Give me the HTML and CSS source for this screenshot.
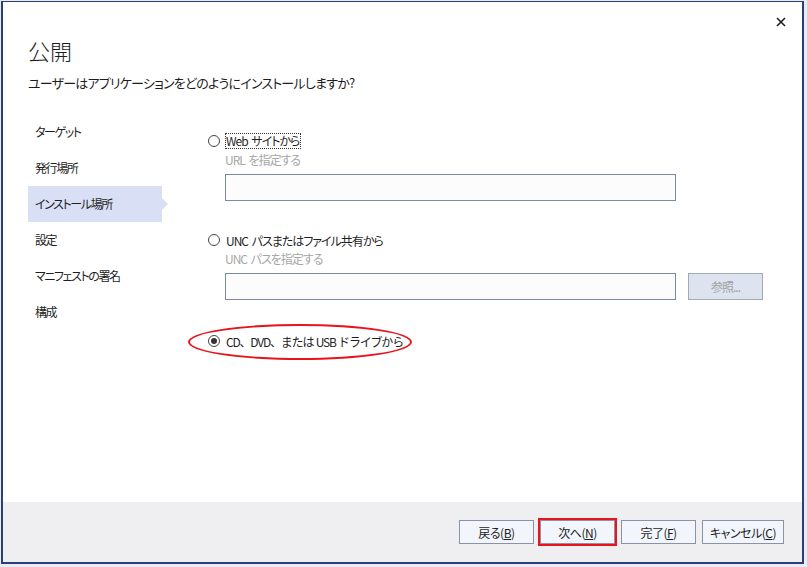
FILE: index.html
```html
<!DOCTYPE html>
<html lang="ja">
<head>
    <meta charset="UTF-8">
    <title>公開</title>
    <link rel="stylesheet" href="styles.css">
</head>
<body>
    <div class="dialog">
        <!-- Close button -->
        <svg class="close" width="10" height="10" viewBox="0 0 10 10">
            <path d="M1 1 L9 9 M9 1 L1 9" stroke="#1e1e1e" stroke-width="1.6" fill="none"/>
        </svg>

        <div class="header">
            <h1>公開</h1>
            <p class="subtitle">ユーザーはアプリケーションをどのようにインストールしますか?</p>
        </div>

        <div class="main">
            <!-- Wizard steps -->
            <ul class="nav">
                <li>ターゲット</li>
                <li>発行場所</li>
                <li class="active">インストール場所</li>
                <li>設定</li>
                <li>マニフェストの署名</li>
                <li>構成</li>
            </ul>

            <div class="content">
                <div class="option">
                    <div class="radio-row">
                        <span class="radio"></span>
                        <span class="label focused">Web サイトから</span>
                    </div>
                    <div class="hint">URL を指定する</div>
                    <div class="field-row">
                        <div class="textbox"></div>
                    </div>
                </div>

                <div class="option second">
                    <div class="radio-row">
                        <span class="radio"></span>
                        <span class="label">UNC パスまたはファイル共有から</span>
                    </div>
                    <div class="hint">UNC パスを指定する</div>
                    <div class="field-row">
                        <div class="textbox"></div>
                        <div class="browse">参照...</div>
                    </div>
                </div>

                <div class="option third">
                    <div class="radio-row">
                        <span class="radio checked"></span>
                        <span class="label drive">CD、DVD、または USB ドライブから</span>
                        <span class="mark-ellipse"></span>
                    </div>
                </div>
            </div>
        </div>

        <div class="footer">
            <button class="btn">戻る(<u>B</u>)</button>
            <button class="btn marked">次へ(<u>N</u>)</button>
            <button class="btn">完了(<u>F</u>)</button>
            <button class="btn">キャンセル(<u>C</u>)</button>
        </div>
    </div>
</body>
</html>
```

FILE: styles.css
```css
/* General Styles */
body {
    margin: 0;
    padding: 1px 0 0 1px;
    background: #e9ecf2;
    font-family: 'Noto Sans CJK JP', 'Noto Sans', sans-serif;
    font-size: 12px;
    font-feature-settings: "palt";
    letter-spacing: -1px;
    word-spacing: 2px;
    color: #1e1e1e;
    height: 567px;
    box-sizing: border-box;
    overflow: hidden;
}

.dialog {
    position: relative;
    width: 803px;
    height: 563px;
    box-sizing: border-box;
    border: 2px solid #283f7c;
    border-top-width: 1px;
    background: #fff;
    display: flex;
    flex-direction: column;
}

.close {
    position: absolute;
    top: 15px;
    right: 16px;
}

/* Header */
.header {
    padding: 32px 0 0 25px;
    height: 82px;
}

h1 {
    margin: 0;
    font-size: 22px;
    font-weight: 300;
    line-height: 32px;
    letter-spacing: 0;
    font-feature-settings: normal;
}

.subtitle {
    margin: 8px 0 0 0;
    font-size: 13px;
    line-height: 18px;
    letter-spacing: -0.8px;
}

/* Body */
.main {
    flex: 1;
    display: flex;
}

.nav {
    list-style: none;
    margin: -2px 0 0 0;
    padding: 0 0 0 25px;
    width: 134px;
}

.nav li {
    position: relative;
    height: 36px;
    line-height: 36px;
    padding-left: 7px;
    letter-spacing: -1.4px;
}

.nav li.active {
    background: #d9e0f6;
}

.nav li.active::after {
    content: "";
    position: absolute;
    top: 12px;
    right: -6px;
    border-left: 6px solid #d9e0f6;
    border-top: 6px solid transparent;
    border-bottom: 6px solid transparent;
}

.content {
    padding: 16px 0 0 46px;
    display: flex;
    flex-direction: column;
}

.option {
    display: flex;
    flex-direction: column;
}

.option.second {
    margin-top: 30px;
}

.option.third {
    margin-top: 32px;
}

.radio-row {
    position: relative;
    display: flex;
    align-items: center;
    height: 18px;
    gap: 6px;
}

.radio {
    width: 10px;
    height: 10px;
    border: 1px solid #444;
    border-radius: 50%;
    position: relative;
}

.radio.checked::after {
    content: "";
    position: absolute;
    top: 2px;
    left: 2px;
    width: 6px;
    height: 6px;
    border-radius: 50%;
    background: #333;
}

.label.focused {
    outline: 1px dotted #333;
    line-height: 14px;
    padding: 0 1px 0 0;
}

.label.drive {
    font-feature-settings: normal;
    letter-spacing: -1.2px;
    word-spacing: 1px;
}

.hint {
    color: #a6a6a6;
    margin: 1px 0 0 17px;
    line-height: 18px;
}

.field-row {
    display: flex;
    gap: 12px;
    margin: 5px 0 0 17px;
}

.textbox {
    width: 449px;
    height: 25px;
    border: 1px solid #7b8aa3;
    background: #fcfcfc;
}

.browse {
    width: 73px;
    height: 25px;
    line-height: 25px;
    text-align: center;
    border: 1px solid #a3a9b5;
    background: #dde4f0;
    color: #a0a0a0;
}

/* Red annotation */
.mark-ellipse {
    position: absolute;
    left: -20px;
    top: -8px;
    width: 220px;
    height: 32px;
    border: 2.5px solid #e8141c;
    border-radius: 50%;
}

/* Footer */
.footer {
    height: 60px;
    background: #efeff1;
    display: flex;
    justify-content: flex-end;
    align-items: center;
    gap: 6px;
    padding-right: 18px;
}

.btn {
    font-family: inherit;
    font-size: 12px;
    font-feature-settings: "palt";
    letter-spacing: -0.5px;
    color: #1e1e1e;
    width: 75px;
    height: 24px;
    padding: 0;
    border: 1px solid #8992a6;
    background: #f2f5fc;
}

.btn:last-child {
    width: 82px;
}

.btn.marked {
    outline: 2px solid #e8141c;
    outline-offset: 0;
}
```
